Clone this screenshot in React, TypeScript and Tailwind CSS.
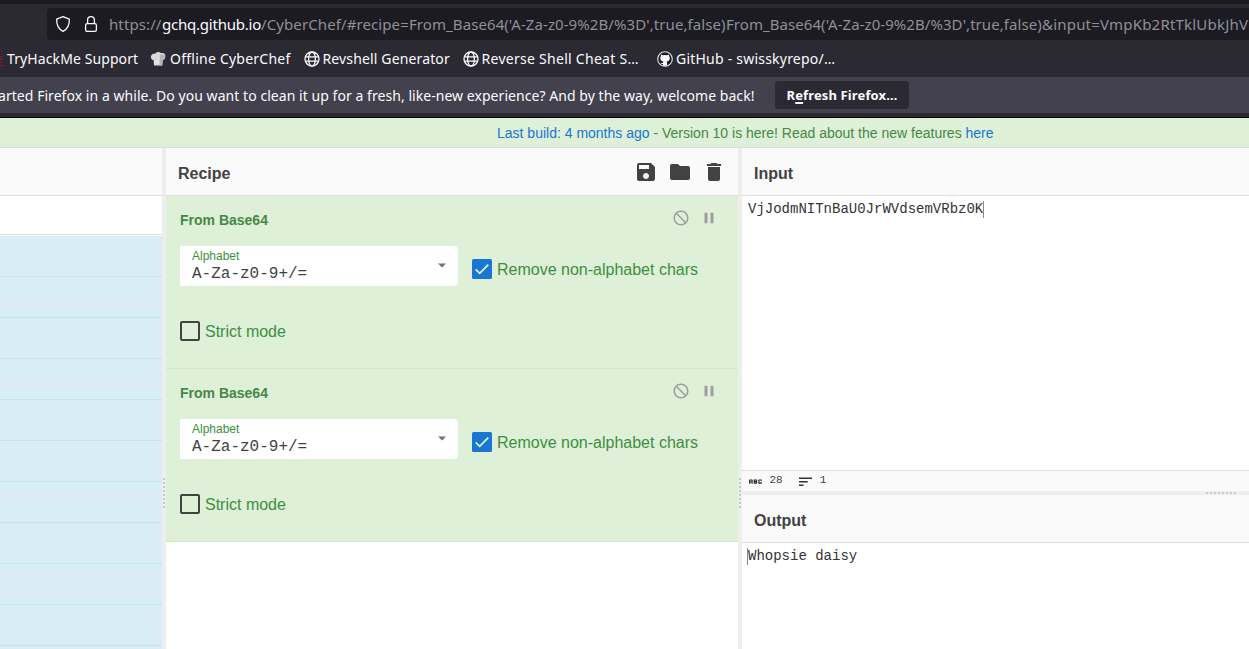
import React from "react";
import { MdSave, MdFolder, MdDelete, MdBlock, MdPause, MdAbc } from "react-icons/md";

const ui = "font-['Noto_Sans','Open_Sans',sans-serif]";

function Globe() {
  return (
    <svg width="16" height="16" viewBox="0 0 16 16" fill="none" stroke="#fbfbfe" strokeWidth="1.3" className="shrink-0">
      <circle cx="8" cy="8" r="7" />
      <ellipse cx="8" cy="8" rx="3.4" ry="7" />
      <path d="M1.3 5.8h13.4M1.3 10.2h13.4" />
    </svg>
  );
}

function Bookmark({ icon, label, cls }: { icon: React.ReactNode; label: string; cls: string }) {
  return (
    <div className={"flex shrink-0 items-center gap-[3px] " + cls}>
      {icon}
      <span>{label}</span>
    </div>
  );
}

function BrowserChrome() {
  return (
    <div className={"text-[#fbfbfe] whitespace-nowrap " + ui}>
      <div className="h-1 bg-[#1c1b22]" />
      <div className="h-9 bg-[#2b2a33] pt-1 pl-[47px]">
        <div className="flex h-8 items-center overflow-hidden rounded-l bg-[#1c1b22] pl-2">
          <svg width="16" height="18" viewBox="0 0 16 18" fill="none" stroke="#fbfbfe" strokeWidth="1.3" strokeLinejoin="round" className="shrink-0">
            <path d="M8 1.6 14.3 4.2C14.6 9.5 12.8 13.8 8 16.4 3.2 13.8 1.4 9.5 1.7 4.2Z" />
          </svg>
          <svg width="14" height="18" viewBox="0 0 14 18" fill="none" stroke="#fbfbfe" strokeWidth="1.3" className="ml-[13px] shrink-0">
            <rect x="1.6" y="8.6" width="10.8" height="7.8" rx="1.6" />
            <path d="M3.6 8.4V5a3.4 3.4 0 0 1 6.8 0v3.4" />
          </svg>
          <div className="ml-[11px] flex pt-px text-[15px] text-[#8f8f98]">
            <span className="w-[53px] shrink-0 tracking-[0.1px]">https://</span>
            <span className="w-[99px] shrink-0 tracking-[-0.22px] text-[#fbfbfe]">gchq.github.io</span>
            <span className="w-[148px] shrink-0 tracking-[0.1px]">/CyberChef/#recipe=</span>
            <span className="w-[317px] shrink-0 tracking-[0.08px]">From_Base64('A-Za-z0-9%2B/%3D',true,false)</span>
            <span className="w-[316px] shrink-0 tracking-[0.06px]">From_Base64('A-Za-z0-9%2B/%3D',true,false)</span>
            <span className="shrink-0 tracking-[0.2px]">&amp;input=VmpKb2RtTklUbkJhV</span>
          </div>
        </div>
      </div>
      <div className="flex h-[37px] items-center overflow-hidden bg-[#2b2a33] text-[14px]">
        <div className="flex w-[150px] shrink-0 items-center gap-1">
          <svg width="3" height="16" viewBox="0 0 3 16" fill="none" stroke="#a3151c" className="shrink-0">
            <path d="M0 5.5Q2.4 5.5 2.4 8.5H0M0 11.2h2.5M0 14.5h2.8" />
          </svg>
          <span className="tracking-[0.1px]">TryHackMe Support</span>
        </div>
        <Bookmark
          cls="w-[154px] tracking-[0.24px]"
          label="Offline CyberChef"
          icon={
            <svg width="17" height="16" viewBox="0 0 17 16" className="shrink-0">
              <path d="M4 14.5 3.7 9.3C1.2 8.8.3 6.6 1.2 4.4 1.9 2.8 3.6 2.4 5 2.8 6.3.7 9.7.4 11 2.2 13.6 1.2 15.8 3 15.4 5.6 15.2 7.6 14 8.8 12.8 9.2L12.2 14.5Z" fill="#d9d9d9" />
              <path d="M10 3.5 15 4C15.6 6.8 14 8.6 12.6 9.2L12.2 14.5H9.5Z" fill="#b5b5b5" />
              <path d="M4.6 9.5 5 12.6M7.8 9.5v3" stroke="#f4f4f4" />
            </svg>
          }
        />
        <Bookmark cls="-ml-[0.5px] w-[159px] tracking-[0.14px]" label="Revshell Generator" icon={<Globe />} />
        <Bookmark cls="w-[194.5px] tracking-[0.28px]" label="Reverse Shell Cheat S…" icon={<Globe />} />
        <Bookmark
          cls="tracking-[0.22px]"
          label="GitHub - swisskyrepo/…"
          icon={
            <svg width="16" height="16" viewBox="0 0 16 16" className="shrink-0">
              <circle cx="8" cy="8" r="7.3" fill="#1c1b22" stroke="#e8e8ec" strokeWidth="1.1" />
              <path d="M4 3.4 6 4.2Q8 3.7 10 4.2L12 3.4 12.2 5.3C13.6 7.6 12.4 10.3 9.7 10.6 10.3 11.4 10.1 13 10.1 14.8H6V13C4.7 13.2 4.2 12.6 3.7 11.7L5 12H6Q6 11 6.4 10.6C3.7 10.3 2.5 7.6 3.8 5.3Z" fill="#fbfbfe" />
            </svg>
          }
        />
      </div>
      <div className="flex h-9 items-center overflow-hidden bg-[#42414d] text-[14px]">
        <span className="-ml-[2px] w-[777px] shrink-0 tracking-[0.05px]">arted Firefox in a while. Do you want to clean it up for a fresh, like-new experience? And by the way, welcome back!</span>
        <button className="flex h-7 w-[134px] shrink-0 items-center justify-center rounded bg-[#2b2a33] pt-px text-[13px] font-bold tracking-[0.13px]">
          <span>R<span className="underline decoration-2 underline-offset-2">e</span>fresh Firefox…</span>
        </button>
      </div>
      <div className="h-[5px] border-b border-black bg-[#2b2a33]" />
    </div>
  );
}

function Operation() {
  return (
    <section className="h-[173px] border-b border-[#d0e9c6] bg-[#dff0d8] pr-5 pl-[14px] text-[#3c8f40]">
      <div className="flex h-[50px] items-center justify-between pb-[2px]">
        <h3 className="text-[14px] font-bold text-[#468847]">From Base64</h3>
        <div className="mb-1 flex gap-[10px] text-[18px] text-[#9e9e9e]">
          <MdBlock className="-scale-x-100" />
          <MdPause />
        </div>
      </div>
      <div className="flex items-center">
        <div className="flex h-10 w-[278px] items-center justify-between rounded-r bg-white pr-2 pl-3">
          <div>
            <div className="text-[12px] leading-[14px]">Alphabet</div>
            <div className="pt-px font-['Liberation_Mono',monospace] text-[16px] leading-[20px] text-[#424242]">A-Za-z0-9+/=</div>
          </div>
          <svg width="16" height="8" viewBox="0 0 16 8"><path d="M4 1.5h8L8 5.5Z" fill="#6c757d" /></svg>
        </div>
        <div className="mt-1.5 ml-[14px] flex items-center gap-[5px] text-[16px]">
          <svg width="20" height="20" viewBox="0 0 20 20"><rect width="20" height="20" rx="1.5" fill="#1976d2" /><path d="m3.7 10.3 4 4 8.6-8.6" fill="none" stroke="#dff0d8" strokeWidth="1.8" /></svg>
          <span className="-mb-[2px]">Remove non-alphabet chars</span>
        </div>
      </div>
      <div className="mt-[32px] flex items-center gap-[5px] text-[16px]">
        <span className="size-5 rounded-[2px] border-2 border-[#424242]" />
        <span className="pt-[2px]">Strict mode</span>
      </div>
    </section>
  );
}

function Title({ children }: { children: React.ReactNode }) {
  return <header className="flex h-12 shrink-0 items-center justify-between border-b border-[#ddd] bg-[#fafafa] pt-[5px] pr-3 pl-3 text-[16px] font-bold text-[#424242]">{children}</header>;
}

function Grip({ vertical }: { vertical?: boolean }) {
  return (
    <div className={vertical ? "flex flex-col gap-[2px]" : "flex gap-[2px]"}>
      {Array.from({ length: 8 }, (_, i) => <span key={i} className="size-[2px] bg-[#c9c9c9]" />)}
    </div>
  );
}

export default function App() {
  return (
    <div className="flex h-[649px] w-[1249px] flex-col overflow-hidden bg-white font-['Liberation_Sans',sans-serif]">
      <BrowserChrome />
      <div className="h-[30px] shrink-0 border-b border-[#ddd] bg-[#dff0d8] pl-[497px] text-[14px] leading-[30px] whitespace-nowrap text-[#468847]">
        <span className="text-[#1976d2]">Last build: 4 months ago</span> - Version 10 is here! Read about the new features <span className="text-[#1976d2]">here</span>
      </div>
      <main className="flex min-h-0 flex-1">
        <aside className="w-[162px] shrink-0 overflow-hidden">
          <div className="h-12 border-b border-[#ddd] bg-[#fafafa]" />
          <div className="mb-px h-[39px] border-b border-[#ddd]" />
          {Array.from({ length: 11 }, (_, i) => <div key={i} className="h-[41px] border-b border-[#bce8f1] bg-[#d9edf7]" />)}
        </aside>
        <div className="flex w-1 shrink-0 flex-col items-center bg-[#eee] pt-[330px]"><Grip vertical /></div>
        <section className="w-[572px] shrink-0">
          <Title>
            Recipe
            <div className="mb-1 flex gap-[10px] text-[24px]">
              <MdSave /><MdFolder /><MdDelete />
            </div>
          </Title>
          <Operation />
          <Operation />
        </section>
        <div className="flex w-1 shrink-0 flex-col items-center bg-[#eee] pt-[330px]"><Grip vertical /></div>
        <section className="flex min-w-0 flex-1 flex-col font-['Liberation_Sans',sans-serif]">
          <Title>Input</Title>
          <div className="flex h-[274px] shrink-0 items-start pt-[5px] pl-[6px] font-['Liberation_Mono',monospace] text-[14px] leading-[17px] text-[#333]">
            VjJodmNITnBaU0JrWVdsemVRbz0K<span className="h-[17px] w-px bg-[#888]" />
          </div>
          <div className="flex h-[21px] shrink-0 items-center border-t border-[#ddd] bg-[#fafafa] pl-[5px] font-['Liberation_Mono',monospace] text-[11px] text-[#424242]">
            <MdAbc className="text-[17px]" color="#222" />
            <span className="mb-[2px] ml-[5.5px]">28</span>
            <svg width="13" height="9" viewBox="0 0 13 9" fill="#333" className="ml-4">
              <path d="M0 .5h13V2H0zM0 4h8.7v1.5H0zM0 7.5h4.5V9H0z" />
            </svg>
            <span className="mb-[2px] ml-[8px]">1</span>
          </div>
          <div className="flex h-1 shrink-0 items-center bg-[#eee] pl-[464px]"><Grip /></div>
          <Title>Output</Title>
          <div className="flex items-start pt-[5px] pl-[5px] font-['Liberation_Mono',monospace] text-[14px] leading-[17px] text-[#333]">
            <span className="h-[17px] w-px bg-[#888]" />Whopsie daisy
          </div>
        </section>
      </main>
    </div>
  );
}
